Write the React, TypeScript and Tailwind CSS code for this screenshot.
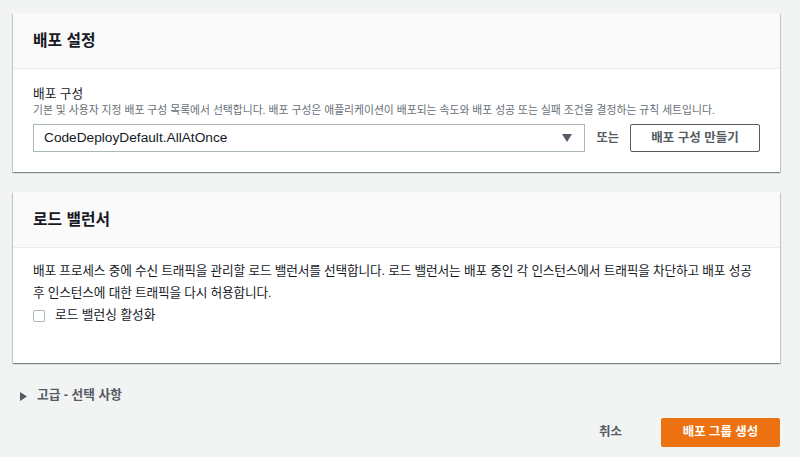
import { useState } from 'react';

const font = { fontFamily: '"Liberation Sans", "Noto Sans CJK KR", sans-serif' };

function Card({ title, children }: { title: string; children: React.ReactNode }) {
  return (
    <section className="bg-white shadow-[0_1px_1px_0_rgba(0,28,36,0.3),1px_1px_1px_0_rgba(0,28,36,0.15),-1px_1px_1px_0_rgba(0,28,36,0.15)]">
      <header className="h-[56px] flex items-center px-5 bg-[#fafafa] border-b border-[#eaeded]">
        <h2 className="text-[15.8px] font-bold text-[#16191f]">{title}</h2>
      </header>
      {children}
    </section>
  );
}

export default function App() {
  const [lb, setLb] = useState(false);

  return (
    <div style={font} className="min-h-screen w-[800px] h-[457px] bg-[#f2f3f3] pt-[13px] pl-[13px] pr-[20px] text-[#16191f] overflow-hidden break-keep">
      <Card title="배포 설정">
        <div className="px-5 pt-[17px] pb-[20px]">
          <div className="text-[12.7px] leading-[16px]">배포 구성</div>
          <div className="text-[10.8px] leading-[15px] text-[#687078] mt-[1px]">
            기본 및 사용자 지정 배포 구성 목록에서 선택합니다. 배포 구성은 애플리케이션이 배포되는 속도와 배포 성공 또는 실패 조건을 결정하는 규칙 세트입니다.
          </div>
          <div className="flex items-center mt-[6px]">
            <div className="w-[553px] h-[28px] border border-[#aab7b8] flex items-center justify-between pl-[10px] pr-[12px]">
              <span className="text-[13.7px]">CodeDeployDefault.AllAtOnce</span>
              <svg width="10" height="8" viewBox="0 0 10 8" className="text-[#545b64]">
                <path d="M0 0h10L5 8z" fill="currentColor" />
              </svg>
            </div>
            <span className="ml-[11px] text-[12.3px] font-bold text-[#545b64]">또는</span>
            <button className="ml-[11px] w-[130px] h-[28px] border border-[#545b64] rounded-[2px] bg-white text-[12.5px] font-bold text-[#545b64]">
              배포 구성 만들기
            </button>
          </div>
        </div>
      </Card>

      <div className="mt-[20px]">
        <Card title="로드 밸런서">
          <div className="px-5 pt-[12px] h-[115px]">
            <p className="text-[12.7px] leading-[22px] tracking-[-0.18px]">
              배포 프로세스 중에 수신 트래픽을 관리할 로드 밸런서를 선택합니다. 로드 밸런서는 배포 중인 각 인스턴스에서 트래픽을 차단하고 배포 성공 후 인스턴스에 대한 트래픽을 다시 허용합니다.
            </p>
            <label className="flex items-center mt-[1px] h-[22px] cursor-pointer">
              <input
                type="checkbox"
                checked={lb}
                onChange={() => setLb(!lb)}
                className="appearance-none w-[12px] h-[12px] border border-[#aab7b8] rounded-[2px] bg-white"
              />
              <span className="ml-[10px] text-[12.7px]">로드 밸런싱 활성화</span>
            </label>
          </div>
        </Card>
      </div>

      <div className="flex items-center mt-[26px] pl-[7px] h-[14px]">
        <svg width="7" height="9" viewBox="0 0 7 9" className="text-[#545b64]">
          <path d="M0 0l7 4.5L0 9z" fill="currentColor" />
        </svg>
        <span className="ml-[10px] text-[12.7px] font-bold text-[#545b64]">고급 - 선택 사항</span>
      </div>

      <div className="flex items-center justify-end mt-[15px]">
        <button className="text-[12.5px] font-bold text-[#545b64] mr-[39px]">취소</button>
        <button className="w-[119px] h-[29px] bg-[#ec7211] rounded-[2px] text-white text-[12.4px] font-bold">
          배포 그룹 생성
        </button>
      </div>
    </div>
  );
}
